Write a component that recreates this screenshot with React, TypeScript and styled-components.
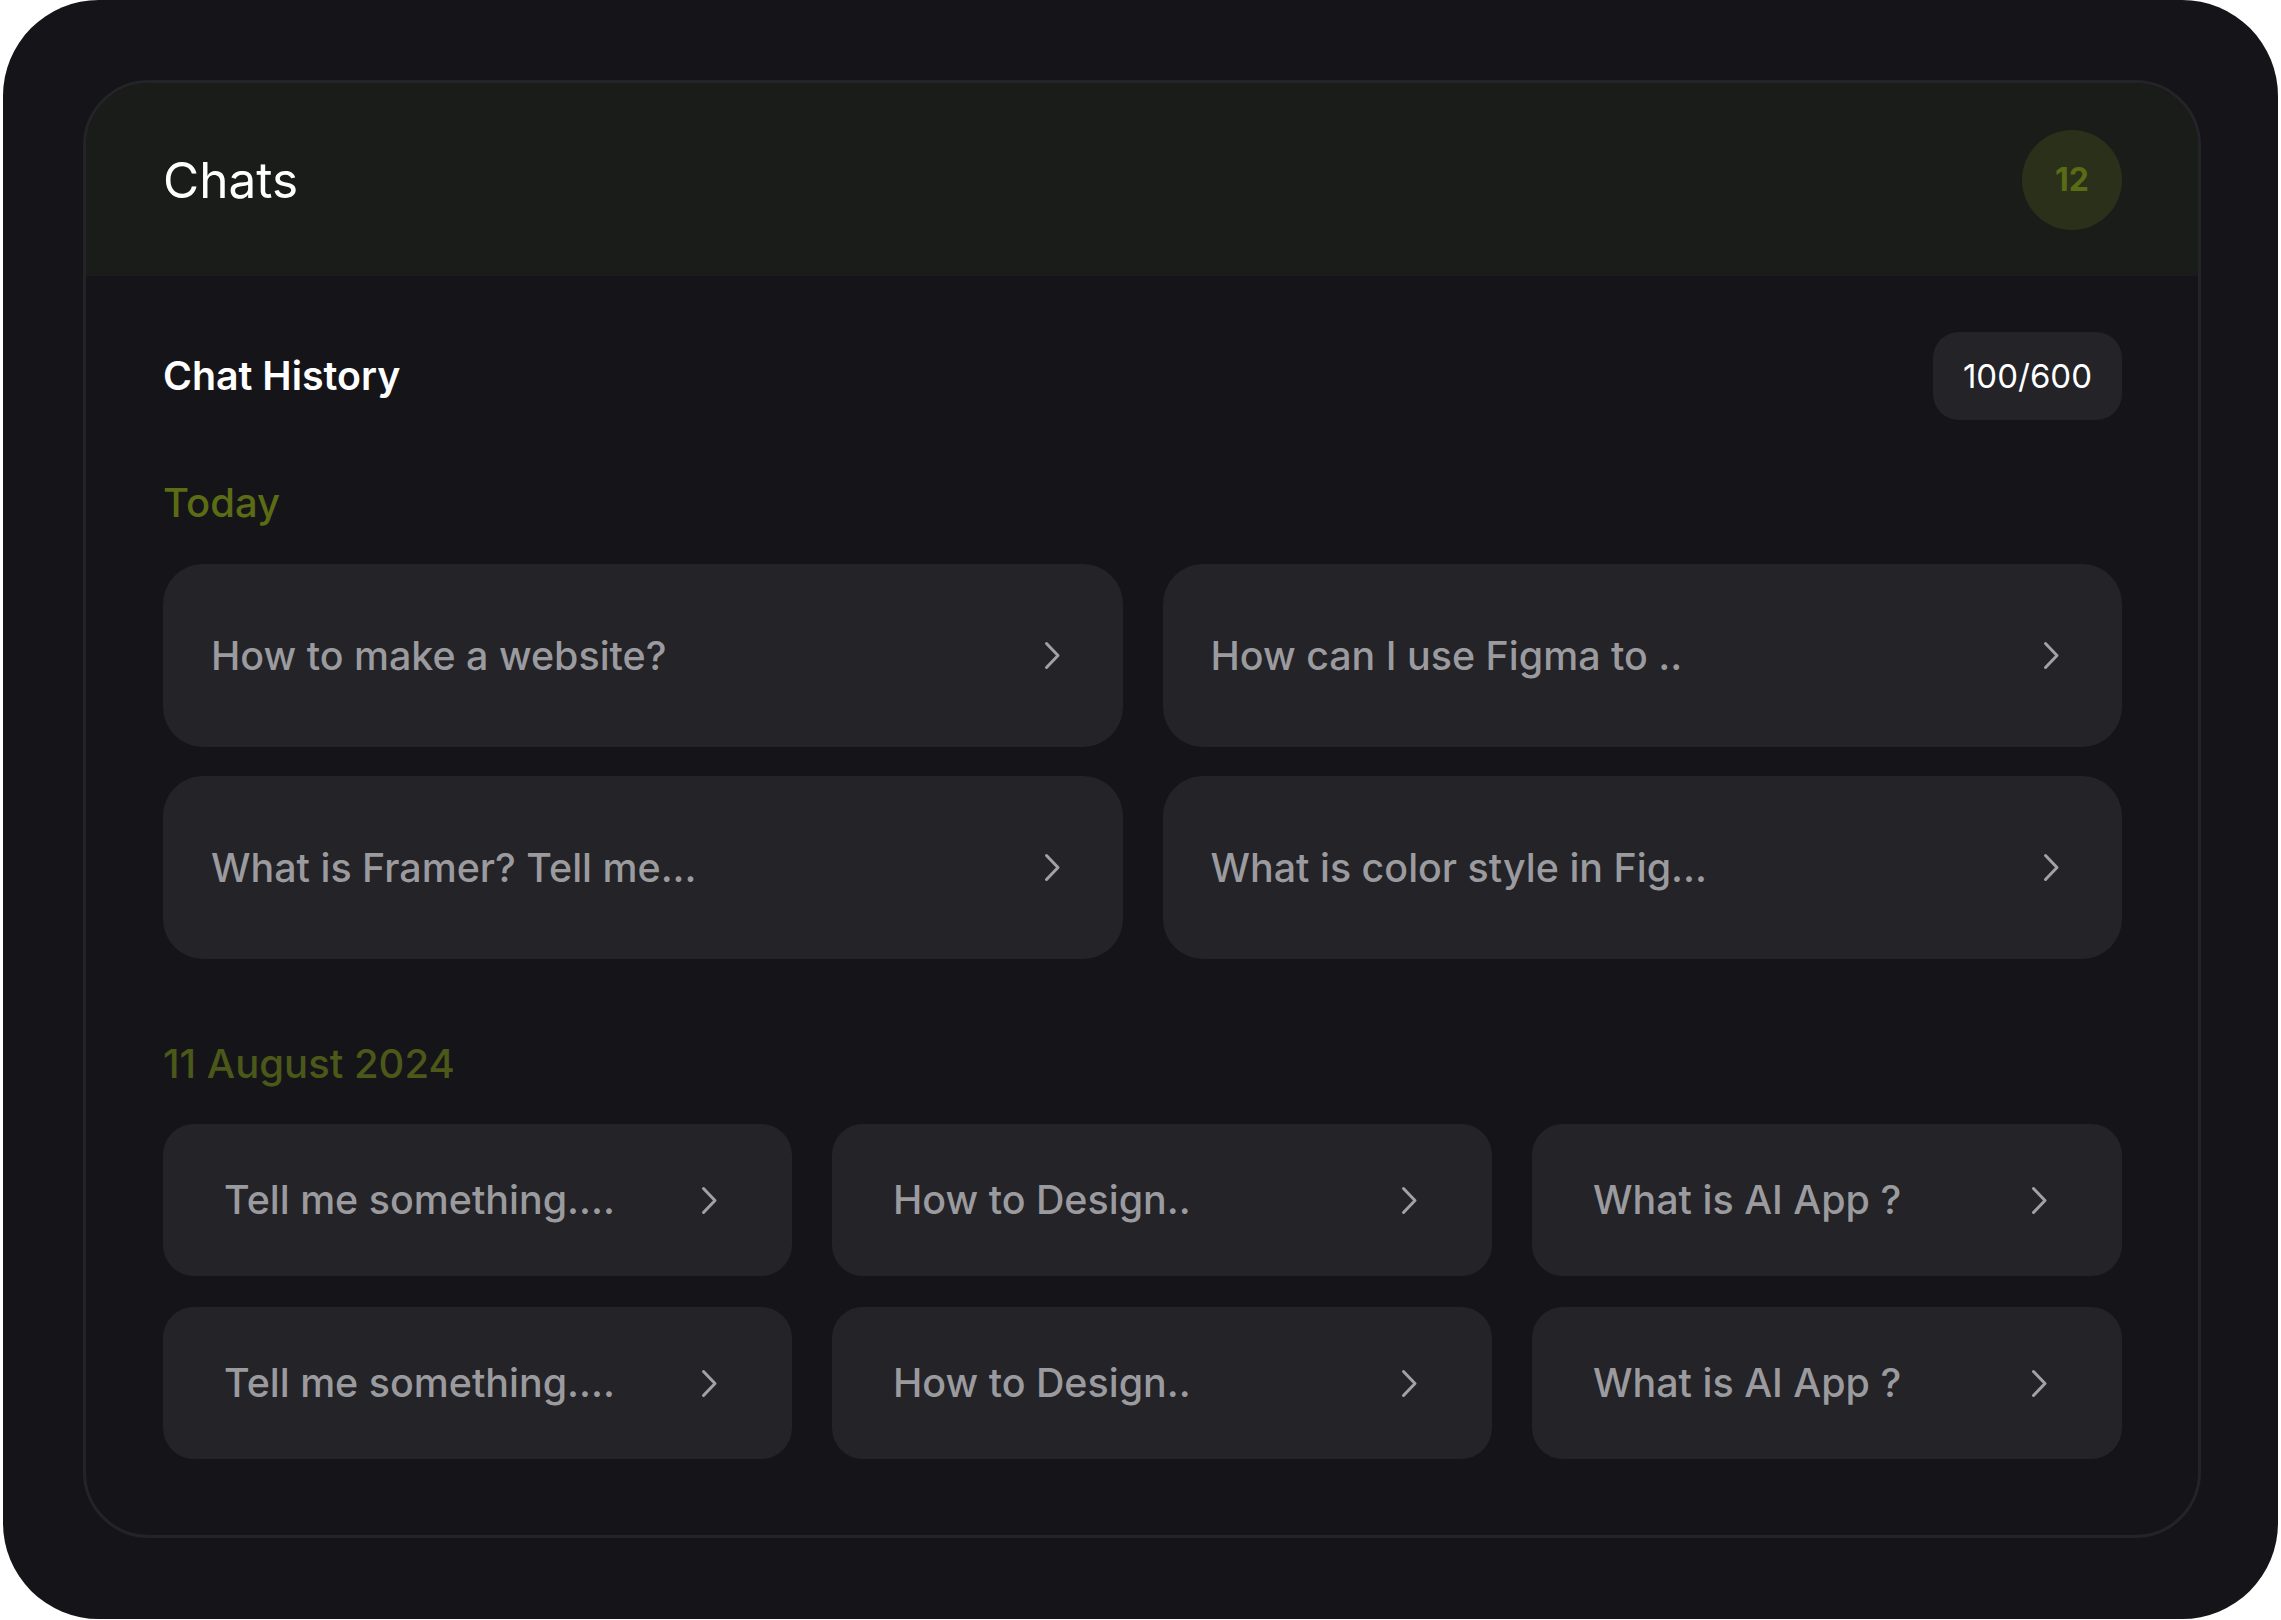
import React from "react";
import styled, { createGlobalStyle } from "styled-components";

const GlobalStyle = createGlobalStyle`
  html, body {
    margin: 0;
    padding: 0;
    background: #ffffff;
  }
  body {
    font-family: Inter, "Noto Sans", "Liberation Sans", sans-serif;
    -webkit-font-smoothing: antialiased;
  }
  * { box-sizing: border-box; }
`;

const Frame = styled.div`
  margin: 0 3px;
  width: 2275px;
  height: 1619px;
  background: #151519;
  border-radius: 96px;
  padding: 80px 77px 81px 80px;
`;

const Panel = styled.section`
  height: 100%;
  border: 3px solid #242428;
  border-radius: 66px;
  overflow: hidden;
  display: flex;
  flex-direction: column;
  background: #151519;
`;

const Header = styled.header`
  height: 193px;
  flex: none;
  background: #1a1c19;
  display: flex;
  align-items: center;
  justify-content: space-between;
  padding: 0 76px 0 77px;
`;

const Title = styled.h1`
  margin: 0;
  font-size: 49.5px;
  line-height: 50px;
  font-weight: 400;
  color: #ffffff;
`;

const CountBadge = styled.div`
  width: 100px;
  height: 100px;
  border-radius: 50%;
  background: #2b301a;
  color: #5a6b15;
  font-size: 32px;
  font-weight: 700;
  display: flex;
  align-items: center;
  justify-content: center;
`;

const Body = styled.div`
  flex: 1;
  padding: 56px 76px 76px 77px;
  display: flex;
  flex-direction: column;
`;

const HistoryRow = styled.div`
  height: 88px;
  display: flex;
  align-items: center;
  justify-content: space-between;
`;

const SubTitle = styled.h2`
  margin: 0;
  font-size: 39.3px;
  line-height: 40px;
  font-weight: 600;
  color: #ffffff;
`;

const Quota = styled.div`
  height: 88px;
  padding: 0 30px;
  border-radius: 26px;
  background: #232328;
  color: #ffffff;
  font-size: 33px;
  line-height: 33px;
  font-weight: 400;
  display: flex;
  align-items: center;
`;

const GroupLabel = styled.h3<{ $tone: string; $top: number; $bottom: number }>`
  margin: ${(p) => p.$top}px 0 ${(p) => p.$bottom}px;
  font-size: 40px;
  line-height: 40px;
  font-weight: 500;
  color: ${(p) => p.$tone};
`;

const Grid = styled.div<{ $cols: string; $rowGap: number }>`
  display: grid;
  grid-template-columns: ${(p) => p.$cols};
  column-gap: 40px;
  row-gap: ${(p) => p.$rowGap}px;
`;

const ChatCard = styled.button<{ $height: number; $radius: number; $padL: number; $padR: number }>`
  all: unset;
  box-sizing: border-box;
  height: ${(p) => p.$height}px;
  border-radius: ${(p) => p.$radius}px;
  background: #232328;
  display: flex;
  align-items: center;
  justify-content: space-between;
  padding: 0 ${(p) => p.$padR}px 0 ${(p) => p.$padL}px;
  cursor: pointer;
`;

const ChatText = styled.span`
  font-family: Inter, "Noto Sans", "Liberation Sans", sans-serif;
  font-size: 39.4px;
  line-height: 40px;
  font-weight: 500;
  color: #9b9b9f;
  white-space: nowrap;
`;

const Chevron = () => (
  <svg width="17" height="29" viewBox="0 0 17 29" fill="none">
    <polyline
      points="2.5,2.5 14,14.5 2.5,26.5"
      stroke="#a2a2a6"
      strokeWidth="3"
      strokeLinecap="round"
      strokeLinejoin="round"
    />
  </svg>
);

const today = [
  "How to make a website?",
  "How can I use Figma to ..",
  "What is Framer? Tell me...",
  "What is color style in Fig...",
];

const august = [
  "Tell me something....",
  "How to Design..",
  "What is AI App ?",
  "Tell me something....",
  "How to Design..",
  "What is AI App ?",
];

export default function App() {
  return (
    <>
      <GlobalStyle />
      <Frame>
        <Panel>
          <Header>
            <Title>Chats</Title>
            <CountBadge>12</CountBadge>
          </Header>
          <Body>
            <HistoryRow>
              <SubTitle>Chat History</SubTitle>
              <Quota>100/600</Quota>
            </HistoryRow>

            <GroupLabel $tone="#5b6c15" $top={63} $bottom={41}>
              Today
            </GroupLabel>
            <Grid $cols="1fr 1fr" $rowGap={29}>
              {today.map((t) => (
                <ChatCard key={t} $height={183} $radius={40} $padL={48} $padR={62}>
                  <ChatText>{t}</ChatText>
                  <Chevron />
                </ChatCard>
              ))}
            </Grid>

            <GroupLabel $tone="#4b5819" $top={85} $bottom={40}>
              11 August 2024
            </GroupLabel>
            <Grid $cols="628fr 659fr 589fr" $rowGap={31}>
              {august.map((t, i) => (
                <ChatCard key={i} $height={152} $radius={31} $padL={61} $padR={74}>
                  <ChatText>{t}</ChatText>
                  <Chevron />
                </ChatCard>
              ))}
            </Grid>
          </Body>
        </Panel>
      </Frame>
    </>
  );
}
